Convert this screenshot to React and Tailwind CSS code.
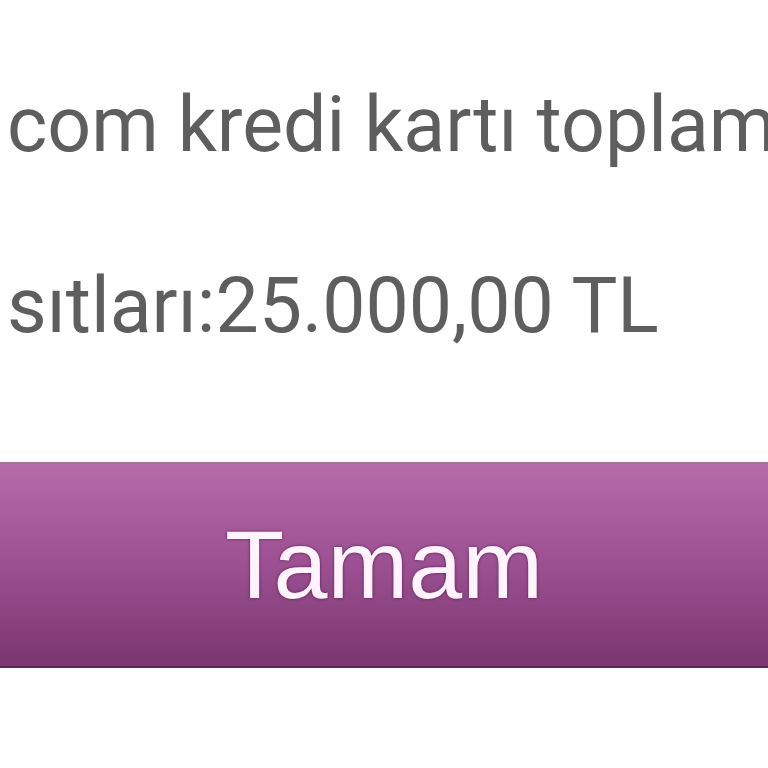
import React from 'react';

export default function App() {
  return (
    <div className="w-[768px] h-[768px] bg-white overflow-hidden flex flex-col">
      {/* Message text */}
      <div className="pl-[7px] font-['Roboto',sans-serif] text-[#5e5e5e] text-[77px] leading-[100px] whitespace-nowrap">
        <p className="mt-[75px]">com kredi kartı toplam</p>
        <p className="mt-[81px]">sıtları:25.000,00 TL</p>
      </div>

      {/* OK button */}
      <button className="mt-[106px] h-[206px] w-full shrink-0 border-t-2 border-t-[#a07896] border-b-2 border-b-[#5e2a55] bg-gradient-to-b from-[#b86ba9] via-[#9c5092] to-[#7a366f] flex items-center justify-center">
        <span className="font-['Liberation_Sans',Arial,sans-serif] text-[97px] text-[#fff4fd] [text-shadow:0_0_3px_rgba(70,20,60,0.9)]">
          Tamam
        </span>
      </button>
    </div>
  );
}
